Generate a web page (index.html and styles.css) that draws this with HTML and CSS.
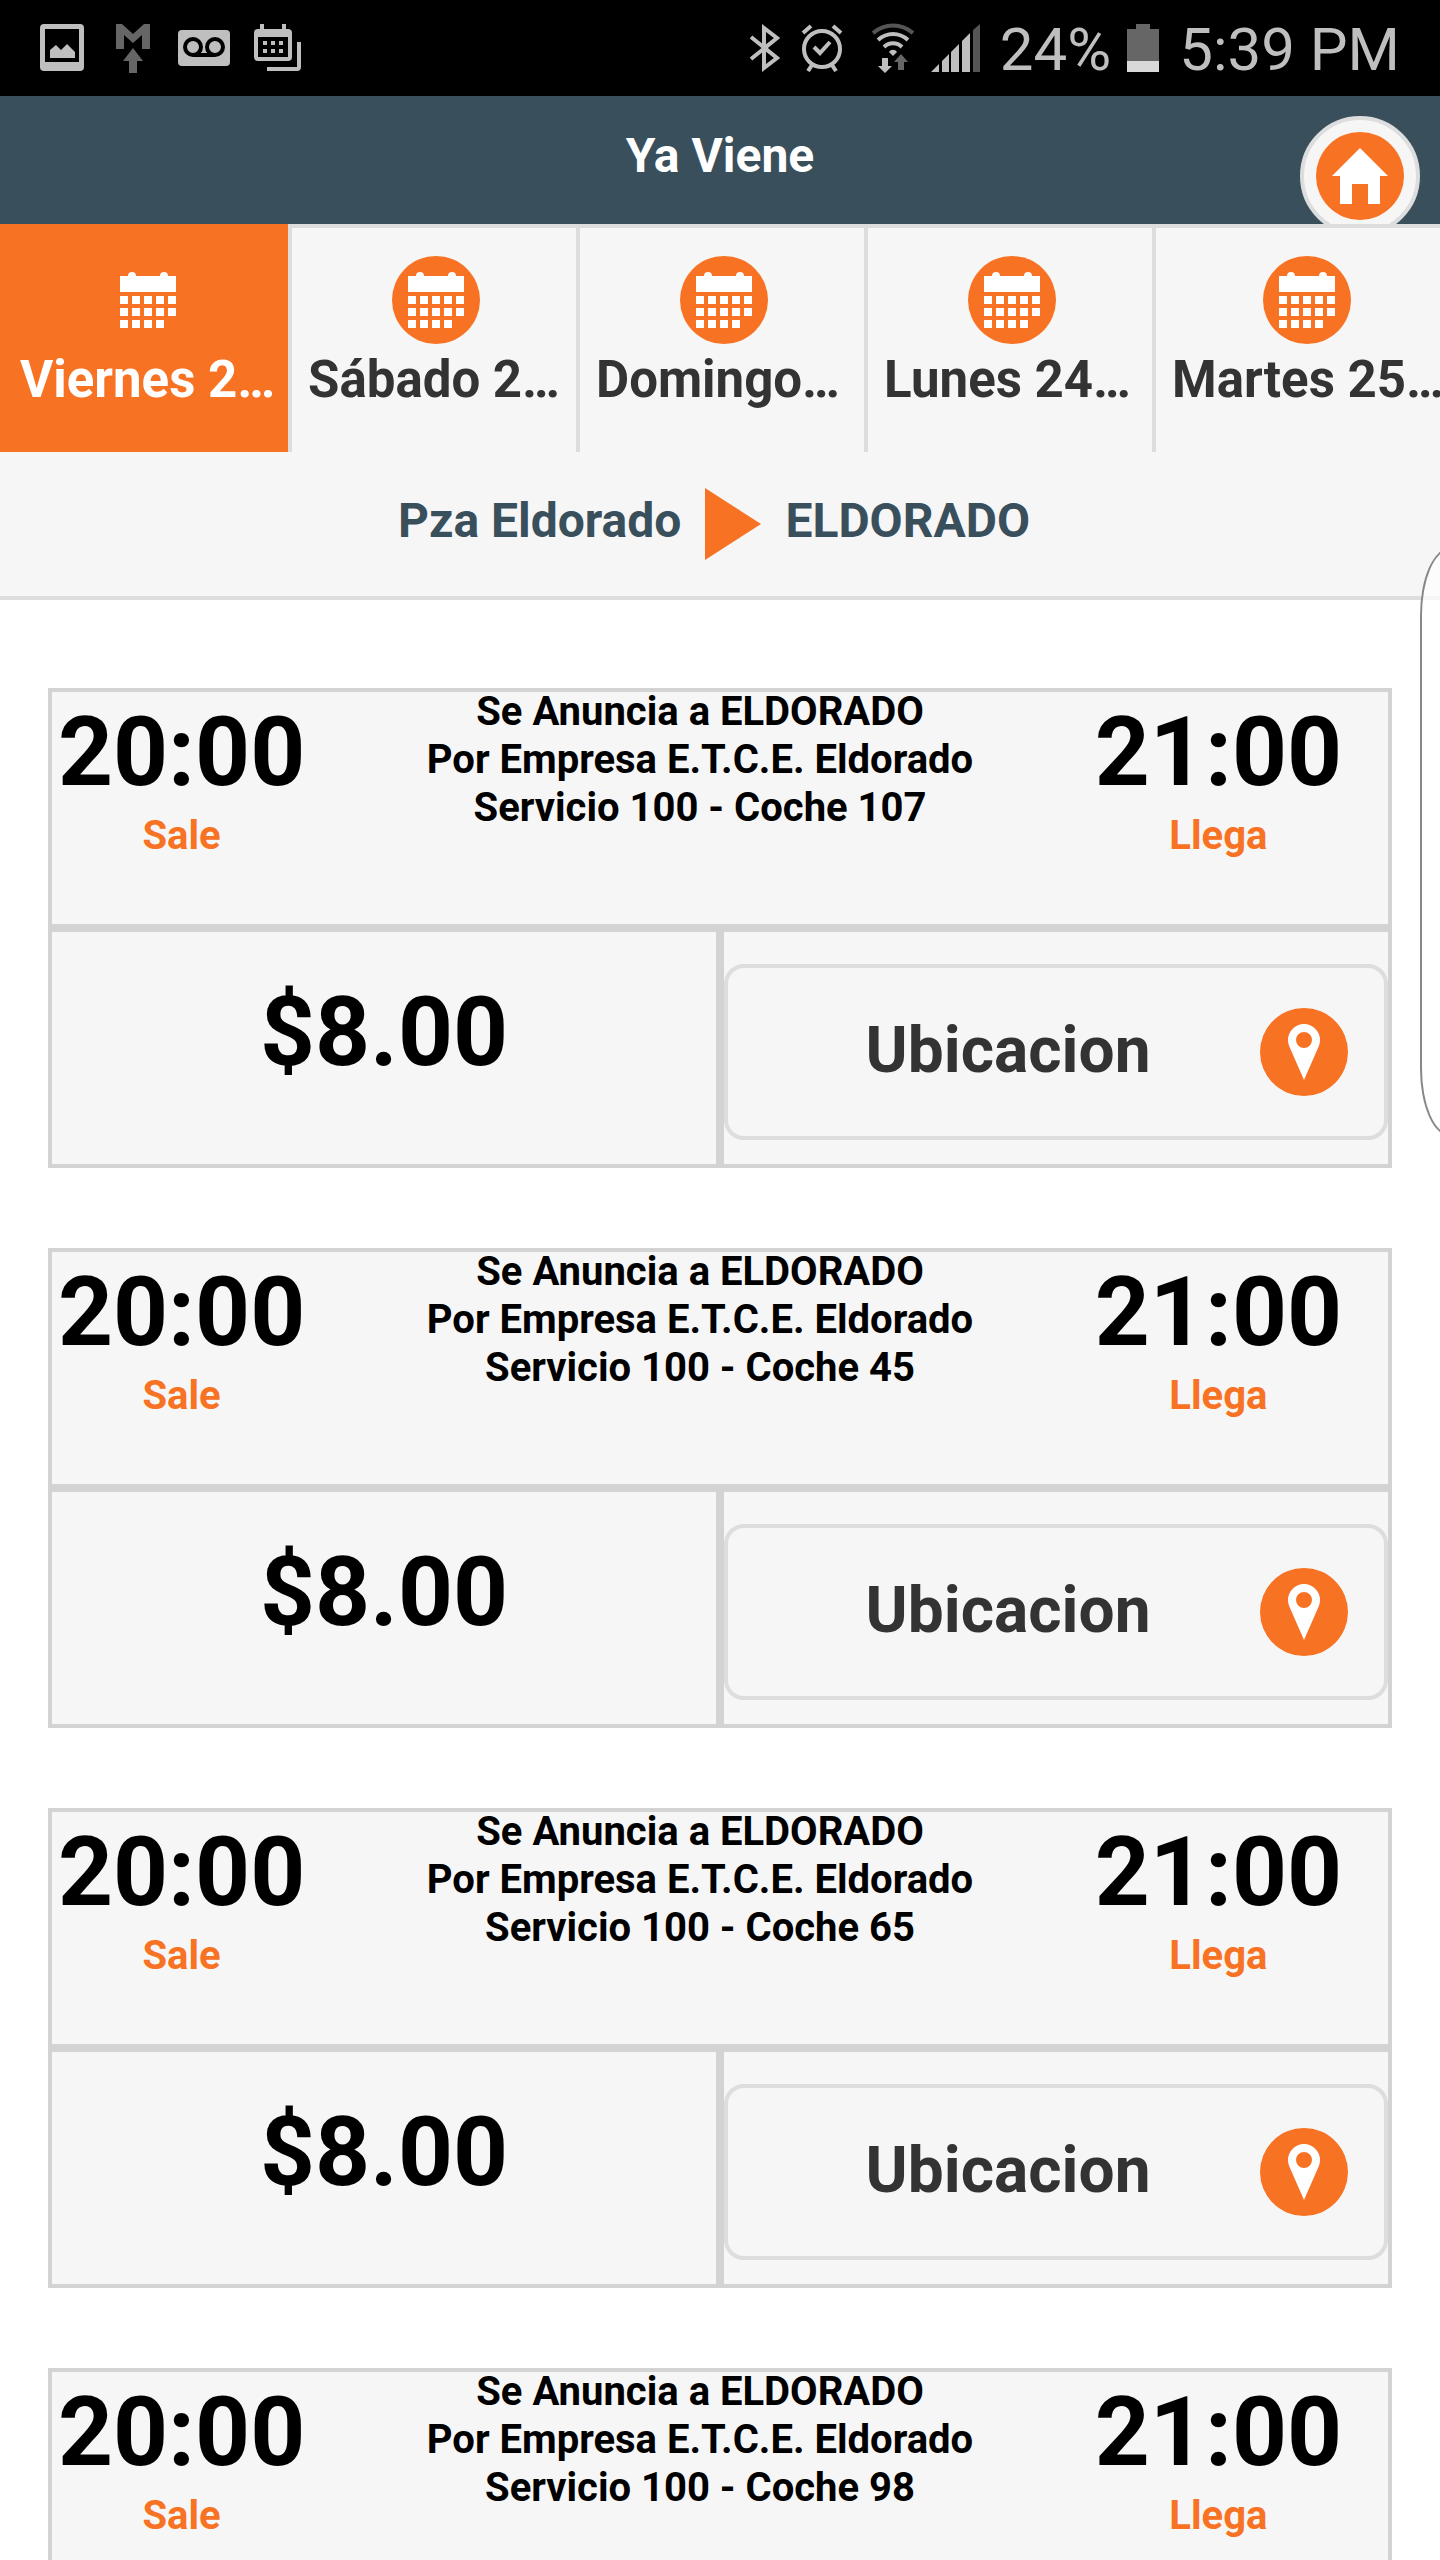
FILE: index.html
```html
<!DOCTYPE html>
<html lang="es">
<head>
  <meta charset="UTF-8">
  <meta name="viewport" content="width=device-width, initial-scale=1.0">
  <title>Ya Viene</title>
  <link rel="stylesheet" href="styles.css">
</head>
<body>
  <!-- icons used more than once -->
  <svg class="defs" aria-hidden="true">
    <symbol id="calendar" viewBox="0 0 56 56">
      <path d="M0 4h8a4 4 0 0 1 8 0h24a4 4 0 0 1 8 0h8v16H0z"/>
      <path d="M0 24h8v8H0zM12 24h8v8h-8zM24 24h8v8h-8zM36 24h8v8h-8zM48 24h8v8h-8zM0 36h8v8H0zM12 36h8v8h-8zM24 36h8v8h-8zM36 36h8v8h-8zM48 36h8v8h-8zM0 48h8v8H0zM12 48h8v8h-8zM24 48h8v8h-8zM36 48h8v8h-8z"/>
    </symbol>
    <symbol id="pin" viewBox="0 0 56 56">
      <path fill-rule="evenodd" d="M28 0a16 16 0 0 0-16 16c0 3 1 6 2 8l14 32 14-32c1-2 2-5 2-8A16 16 0 0 0 28 0zm0 8a8 8 0 1 1 0 16 8 8 0 0 1 0-16z"/>
    </symbol>
  </svg>

  <div class="status-bar">
    <div class="status-left">
      <svg width="44" height="48" viewBox="0 0 44 48"><path fill-rule="evenodd" d="M4 0h36a4 4 0 0 1 4 4v39a4 4 0 0 1-4 4H4a4 4 0 0 1-4-4V4a4 4 0 0 1 4-4zm1 5v33h34V5zM10 34v-8l6-5 5 5 6-6 8 8v6z"/></svg>
      <svg class="dim" width="46" height="50" viewBox="-8 0 46 50"><path d="M0 1h6l11 10L28 1h6v25h-8V12l-9 8-9-8v14H0zM17 25l10 13h-6v12h-8V38H7z"/></svg>
      <svg width="52" height="48" viewBox="0 0 52 48"><rect y="6" width="52" height="36" rx="4"/><g fill="#bfbfbf" stroke="#000" stroke-width="4"><path d="M15 31h22"/><circle cx="15" cy="23" r="8"/><circle cx="37" cy="23" r="8"/></g></svg>
      <svg width="48" height="48" viewBox="0 0 48 48"><path fill-rule="evenodd" d="M6 0h4v5h18V0h4v5h2a4 4 0 0 1 4 4v24a4 4 0 0 1-4 4H4a4 4 0 0 1-4-4V9a4 4 0 0 1 4-4h2zM4 13v20h30V13z"/><path d="M9 17h4v4H9zM17 17h4v4h-4zM25 17h4v4h-4zM9 25h4v4H9zM17 25h4v4h-4zM25 25h4v4h-4zM43 18h4v25a4 4 0 0 1-4 4H13v-4h30z"/></svg>
    </div>
    <div class="status-right">
      <svg width="32" height="48" viewBox="0 0 32 48"><path d="M2 13l26 21-13 10V4l13 10L2 35" fill="none" stroke="#bfbfbf" stroke-width="4"/></svg>
      <svg width="46" height="48" viewBox="-4 0 46 48"><g fill="none" stroke="#bfbfbf" stroke-width="4"><circle cx="21" cy="25" r="18"/><path d="M13 23l6 6 10-11M2 9l8-7M40 9l-8-7M11 41l-4 6M31 41l4 6"/></g></svg>
      <svg width="56" height="50" viewBox="-12 0 56 50"><g fill="none" stroke="#bfbfbf" stroke-width="4"><path stroke="#555" d="M2 10c12-10 28-10 40 0"/><path d="M7 17c9-8 21-8 30 0M13 24c5-5 13-5 18 0"/></g><path d="M18 29c2-3 6-3 8 0l-4 4zM11 35h6v8h4l-7 7-7-7h4z"/><path class="dim" d="M27 47V39h-4l7-8 7 8h-4v8z"/></svg>
      <svg width="49" height="48" viewBox="0 0 49 48"><path d="M0 48l8-8v8zM11 37l7-7v18h-7zM20 28l8-8v28h-8zM31 17l8-8v39h-8z"/><path fill="#555" d="M42 6l7-6v48h-7z"/></svg>
      <span class="status-text">24%</span>
      <svg width="32" height="48" viewBox="0 0 32 48"><path class="dim" d="M0 5h9V0h14v5h9v32H0z"/><path fill="#d9d9d9" d="M0 37h32v11H0z"/></svg>
      <span class="status-text">5:39 PM</span>
    </div>
  </div>

  <header>
    <h1>Ya Viene</h1>
    <a class="home" href="#" aria-label="Inicio">
      <span class="icon-disc">
        <svg width="56" height="56" viewBox="0 0 56 56"><path d="M28 0l28 28h-8v28H36V36H20v20H8V28H0z"/></svg>
      </span>
    </a>
  </header>

  <nav class="days">
    <a class="day active" href="#"><span class="icon-disc"><svg width="56" height="56"><use href="#calendar"/></svg></span><span class="day-name">Viernes 2…</span></a>
    <a class="day" href="#"><span class="icon-disc"><svg width="56" height="56"><use href="#calendar"/></svg></span><span class="day-name">Sábado 2…</span></a>
    <a class="day" href="#"><span class="icon-disc"><svg width="56" height="56"><use href="#calendar"/></svg></span><span class="day-name">Domingo…</span></a>
    <a class="day" href="#"><span class="icon-disc"><svg width="56" height="56"><use href="#calendar"/></svg></span><span class="day-name">Lunes 24…</span></a>
    <a class="day" href="#"><span class="icon-disc"><svg width="56" height="56"><use href="#calendar"/></svg></span><span class="day-name">Martes 25…</span></a>
  </nav>

  <h2 class="route">
    <span>Pza Eldorado</span>
    <svg width="56" height="72" viewBox="0 0 56 72"><path d="M0 0l56 36L0 72z"/></svg>
    <span>ELDORADO</span>
  </h2>

  <main id="services">
    <!-- Service cards are loaded here -->
  </main>

  <div class="edge-panel"></div>

  <script>
    const services = [
      { leaves: '20:00', arrives: '21:00', price: '$8.00', number: 100, bus: 107 },
      { leaves: '20:00', arrives: '21:00', price: '$8.00', number: 100, bus: 45 },
      { leaves: '20:00', arrives: '21:00', price: '$8.00', number: 100, bus: 65 },
      { leaves: '20:00', arrives: '21:00', price: '$8.00', number: 100, bus: 98 },
    ];

    const container = document.getElementById('services');

    services.forEach(service => {
      const card = document.createElement('section');
      card.classList.add('card');
      card.innerHTML = `
        <div class="trip">
          <div class="time"><span class="hour">${service.leaves}</span><span class="caption">Sale</span></div>
          <p class="info">Se Anuncia a ELDORADO<br>Por Empresa E.T.C.E. Eldorado<br>Servicio ${service.number} - Coche ${service.bus}</p>
          <div class="time"><span class="hour">${service.arrives}</span><span class="caption">Llega</span></div>
        </div>
        <div class="price">${service.price}</div>
        <div class="location">
          <button type="button">
            <span class="label">Ubicacion</span>
            <span class="icon-disc"><svg width="56" height="56"><use href="#pin"/></svg></span>
          </button>
        </div>
      `;
      container.appendChild(card);
    });
  </script>
</body>
</html>
```
FILE: styles.css
```css
* {
  box-sizing: border-box;
}

html {
  height: 100%;
  overflow: hidden;
}

body {
  height: 100%;
  overflow: hidden;
  margin: 0;
  position: relative;
  font-family: Roboto, "Liberation Sans", sans-serif;
  font-weight: bold;
  background-color: #fff;
}

svg {
  display: block;
  flex-shrink: 0;
}

.defs {
  position: absolute;
  width: 0;
  height: 0;
}

.icon-disc {
  display: flex;
  flex-shrink: 0;
  align-items: center;
  justify-content: center;
  width: 88px;
  height: 88px;
  border-radius: 50%;
  background-color: #f87224;
  fill: #fff;
}

.status-bar {
  display: flex;
  justify-content: space-between;
  align-items: center;
  height: 96px;
  padding: 4px 40px 0;
  background-color: #000;
  color: #bfbfbf;
  fill: #bfbfbf;
  font-size: 60px;
  font-weight: 400;
  line-height: 92px;
}

.status-left,
.status-right {
  display: flex;
  align-items: center;
}

.status-left {
  gap: 24px;
}

.status-right {
  gap: 16px;
}

.status-bar svg {
  margin-bottom: 4px;
}

.status-text {
  margin-left: 4px;
}

.dim {
  fill: #666;
}

header {
  position: relative;
  height: 128px;
  overflow: hidden;
  background-color: #394f5c;
  color: #fff;
}

h1 {
  margin: 0;
  font-size: 48px;
  line-height: 120px;
  text-align: center;
}

.home {
  position: absolute;
  top: 20px;
  right: 20px;
  padding: 12px;
  border: 4px solid #ddd;
  border-radius: 50%;
  background-color: #f6f6f6;
}

/* last day runs a little past the screen edge */
.days {
  display: grid;
  grid-template-columns: repeat(4, 20%) 21%;
  height: 228px;
  background-color: #f6f6f6;
}

.day {
  display: flex;
  flex-direction: column;
  align-items: center;
  gap: 4px;
  min-width: 0;
  padding: 28px 12px 0 16px;
  border-top: 4px solid #ddd;
  border-left: 4px solid #ddd;
  color: #333;
  text-decoration: none;
}

.day.active {
  border-color: #f87224;
  background-color: #f87224;
  color: #fff;
}

.day-name {
  width: 100%;
  white-space: nowrap;
  font-size: 51px;
  line-height: 64px;
}

.route {
  display: flex;
  justify-content: center;
  align-items: center;
  gap: 24px;
  height: 148px;
  margin: 0;
  padding-right: 12px;
  border-bottom: 4px solid #ddd;
  background-color: #f6f6f6;
  color: #394f5c;
  fill: #f87224;
  font-size: 48px;
}

.route span {
  padding-bottom: 8px;
}

#services {
  display: flex;
  flex-direction: column;
  gap: 80px;
  padding: 88px 48px;
}

.card {
  display: grid;
  grid-template-columns: 1fr 1fr;
  grid-template-rows: 240px 240px;
  flex-shrink: 0;
  color: #000;
}

.trip,
.price,
.location {
  border: 4px solid #d3d3d3;
  background-color: #f6f6f6;
}

.trip {
  grid-column: 1 / 3;
  display: grid;
  grid-template-columns: 20% 1fr 20%;
  padding-right: 40px;
}

.time {
  display: flex;
  flex-direction: column;
  align-items: center;
}

.hour {
  font-size: 96px;
  line-height: 120px;
}

.caption {
  color: #f87224;
  font-size: 40px;
  line-height: 48px;
}

.info {
  margin: -4px 0 0;
  text-align: center;
  font-size: 40px;
  line-height: 48px;
}

.price {
  font-size: 96px;
  line-height: 200px;
  text-align: center;
}

.location {
  padding-top: 32px;
}

button {
  display: flex;
  align-items: center;
  width: 100%;
  height: 176px;
  padding: 0 36px;
  border: 4px solid #ddd;
  border-radius: 20px;
  background-color: #f6f6f6;
  color: #333;
  font-family: inherit;
  font-size: 64px;
  font-weight: bold;
}

.label {
  flex: 1;
  padding: 0 8px 4px 0;
  text-align: center;
}

.edge-panel {
  position: absolute;
  top: 548px;
  right: -40px;
  width: 60px;
  height: 588px;
  border: 2px solid #888;
  border-radius: 40px / 90px;
  background-color: rgba(255, 255, 255, 0.7);
}
```
